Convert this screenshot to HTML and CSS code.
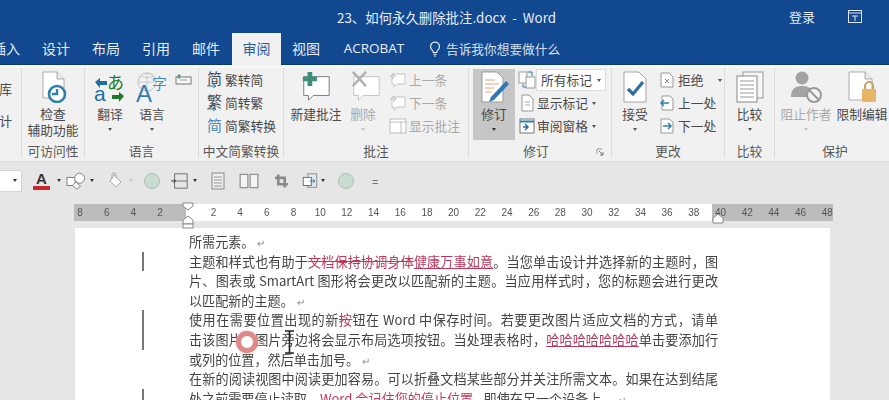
FILE: index.html
```html
<!DOCTYPE html>
<html lang="zh">
<head>
<meta charset="utf-8">
<title>23、如何永久删除批注.docx - Word</title>
<link rel="stylesheet" href="styles.css">
</head>
<body>
<div class="app">
  <header class="titlebar">
    <div class="doc-title">23、如何永久删除批注.docx&nbsp; -&nbsp; Word</div>
    <div class="login">登录</div>
    <svg class="win-icon" viewBox="0 0 14 13"><rect x=".5" y=".5" width="13" height="12" fill="none" stroke="#dfe8f4"/><path d="M.5 3h13M4 6h6M7 6v5" stroke="#dfe8f4" fill="none"/></svg>
  </header>

  <nav class="tabs">
    <div class="tab tab-clip">插入</div>
    <div class="tab">设计</div>
    <div class="tab">布局</div>
    <div class="tab">引用</div>
    <div class="tab">邮件</div>
    <div class="tab active">审阅</div>
    <div class="tab">视图</div>
    <div class="tab tab-wide">ACROBAT</div>
    <svg class="bulb" viewBox="0 0 12 16"><path d="M6 1a4.600 4.600 0 0 0-2.600 8.300c.6.500.8 1.200.8 2.200h3.600c0-1 .2-1.700.8-2.200A4.600 4.600 0 0 0 6 1zM4.400 13.200h3.200M5 15h2" fill="none" stroke="#e6eef8" stroke-width="1.100"/></svg>
    <div class="tell">告诉我你想要做什么</div>
  </nav>

  <section class="ribbon">
    <div class="group">
      <div class="body clip-col"><span>库</span><span>计</span></div>
      <div class="label"></div>
    </div>

    <div class="group">
      <div class="body">
        <div class="big full">
          <svg class="ico" viewBox="0 0 32 32"><path d="M6 1h14l7 7v19H6z" fill="#fff" stroke="#a9a9a9"/><path d="M20 1v7h7" fill="#eee" stroke="#a9a9a9"/><circle cx="20" cy="23" r="8" fill="#fff" stroke="#2f7fa8" stroke-width="2.600"/><path d="M20 18v5h-5" stroke="#2f7fa8" stroke-width="2.400" fill="none"/></svg>
          <span>检查</span><span>辅助功能</span>
        </div>
      </div>
      <div class="label">可访问性</div>
    </div>

    <div class="group">
      <div class="body pad4">
        <div class="big w42">
          <svg class="ico" viewBox="0 0 32 32"><text x="13" y="18" class="g-green">あ</text><text x="0" y="30" class="g-blue">a</text><path d="M1 11l5-4v3h7v4H6v3z" fill="#1f6f9c"/><path d="M30 25l-5-4v3h-7v4h7v3z" fill="#1d7a2c"/></svg>
          <span>翻译</span><i class="caret"></i>
        </div>
        <div class="big w42">
          <svg class="ico" viewBox="0 0 32 32"><circle cx="11" cy="11" r="9" fill="none" stroke="#bbb"/><path d="M2 11h18M11 2v18M5 5c4 2 8 2 12 0" stroke="#ccc" fill="none"/><text x="0" y="31" class="g-a">A</text><text x="16" y="18" class="g-zi">字</text></svg>
          <span>语言</span><i class="caret"></i>
        </div>
        <svg class="tiny" viewBox="0 0 17 12"><rect x="1" y="4" width="15" height="7" fill="#f7f7f7" stroke="#777"/><path d="M4 1v5M2 3h4" stroke="#2f8f6a"/><path d="M5 7h7" stroke="#999"/></svg>
      </div>
      <div class="label">语言</div>
    </div>

    <div class="group">
      <div class="body">
        <div class="rows pad8">
          <div class="row"><svg class="ico-s" viewBox="0 0 15 18"><text x="0" y="13" class="g-han">简</text><path d="M0 15h9m-3-2 3 2-3 2" stroke="#2f7fa8" fill="none"/></svg><span>繁转简</span></div>
          <div class="row"><svg class="ico-s" viewBox="0 0 15 18"><text x="0" y="13" class="g-han">繁</text><path d="M0 15h9m-3-2 3 2-3 2" stroke="#2f7fa8" fill="none"/></svg><span>简转繁</span></div>
          <div class="row"><svg class="ico-s" viewBox="0 0 15 18"><text x="0" y="14" class="g-han blue">简</text></svg><span>简繁转换</span></div>
        </div>
      </div>
      <div class="label">中文简繁转换</div>
    </div>

    <div class="group">
      <div class="body">
        <div class="big w52 ml6">
          <svg class="ico" viewBox="0 0 34 32"><path d="M4 5h27v20H14l-5 5v-5H4z" fill="#fff" stroke="#777"/><path d="M8 0h5v5h5v5h-5v5H8v-5H3V5h5z" fill="#3f8f78"/></svg>
          <span>新建批注</span>
        </div>
        <div class="big w42 off">
          <svg class="ico ico-del" viewBox="0 0 34 32"><path d="M4 5h27v20H14l-5 5v-5H4z" fill="#fff" stroke="#c2c2c2"/><path d="M3 0l14 15M17 0 3 15" stroke="#b0b0b0" stroke-width="2.600"/></svg>
          <span>删除</span><i class="caret pale"></i>
        </div>
        <div class="rows ml5 off">
          <div class="row"><svg class="ico-m" viewBox="0 0 18 16"><path d="M3 2h13v10H8l-3 3v-3H3z" fill="#fff" stroke="#c4c4c4"/><path d="M1 5l3-3 3 3M4 2v5" stroke="#bbb" fill="none"/></svg><span>上一条</span></div>
          <div class="row"><svg class="ico-m" viewBox="0 0 18 16"><path d="M3 2h13v10H8l-3 3v-3H3z" fill="#fff" stroke="#c4c4c4"/><path d="M1 4h6m-3-3 3 3-3 3" stroke="#bbb" fill="none"/></svg><span>下一条</span></div>
          <div class="row"><svg class="ico-m" viewBox="0 0 18 16"><rect x="1" y="1" width="16" height="14" fill="#fff" stroke="#bdbdbd"/><path d="M1 4h16M12 4v11" stroke="#bdbdbd"/></svg><span>显示批注</span></div>
        </div>
      </div>
      <div class="label">批注</div>
    </div>

    <div class="group">
      <div class="body">
        <div class="big track">
          <svg class="ico" viewBox="0 0 32 32"><path d="M4 1h15l6 6v24H4z" fill="#fff" stroke="#999"/><path d="M7 9h10M7 13h14M7 17h9M7 21h6" stroke="#d8a878"/><path d="M28 10l3 3-15 16-5 2 2-5z" fill="#2f77b5"/></svg>
          <span>修订</span><i class="caret dark"></i>
        </div>
        <div class="rows tight">
          <div class="row first"><svg class="ico-m" viewBox="0 0 18 18"><rect x="1" y="1" width="8" height="11" fill="#fff" stroke="#999"/><rect x="8" y="6" width="9" height="11" fill="#fff" stroke="#999"/><path d="M5 13v3h3M10 1h4v4" stroke="#2f7fa8" fill="none"/></svg><div class="select"><span>所有标记</span><i class="caret"></i></div></div>
          <div class="row"><svg class="ico-m" viewBox="0 0 18 18"><path d="M4 1h7l4 4v12H4z" fill="#fff" stroke="#999"/><path d="M7 8h5M7 11h5" stroke="#aaa"/></svg><span>显示标记</span><i class="caret"></i></div>
          <div class="row"><svg class="ico-m" viewBox="0 0 18 18"><rect x="2" y="2" width="14" height="14" fill="#fff" stroke="#777"/><path d="M2 4.500h14" stroke="#2f7fa8" stroke-width="2"/><path d="M5 10h5m-3-3 3 3-3 3" stroke="#2f6fa0" stroke-width="1.500" fill="none"/></svg><span>审阅窗格</span><i class="caret"></i></div>
        </div>
      </div>
      <div class="label label-shift">修订</div>
      <svg class="launcher" viewBox="0 0 8 8"><path d="M1 1h5M1 1v5" stroke="#999" fill="none"/><path d="M3 3l4 4M7 4v3H4" stroke="#777" fill="none"/></svg>
    </div>

    <div class="group">
      <div class="body">
        <div class="big w46">
          <svg class="ico" viewBox="0 0 32 32"><path d="M5 1h15l7 7v23H5z" fill="#fff" stroke="#a5a5a5"/><path d="M9 18l5 5 10-12" fill="none" stroke="#2b6f9f" stroke-width="3.200"/></svg>
          <span>接受</span><i class="caret"></i>
        </div>
        <div class="rows ml2">
          <div class="row"><svg class="ico-n" viewBox="0 0 14 18"><path d="M1 2h8l4 4v10H1z" fill="#fff" stroke="#999"/><path d="M5 8l4 4M9 8l-4 4" stroke="#888"/></svg><span>拒绝</span><i class="caret wide"></i></div>
          <div class="row"><svg class="ico-n" viewBox="0 0 14 18"><path d="M2 2h8l3 3v11H2z" fill="#fff" stroke="#999"/><path d="M9 9H1m3-3-3 3 3 3" stroke="#2f7fa8" stroke-width="1.500" fill="none"/></svg><span>上一处</span></div>
          <div class="row"><svg class="ico-n" viewBox="0 0 14 18"><path d="M1 2h8l4 3v11H1z" fill="#fff" stroke="#999"/><path d="M3 9h8m-3-3 3 3-3 3" stroke="#2f7fa8" stroke-width="1.500" fill="none"/></svg><span>下一处</span></div>
        </div>
      </div>
      <div class="label">更改</div>
    </div>

    <div class="group">
      <div class="body">
        <div class="big full">
          <svg class="ico" viewBox="0 0 32 32"><rect x="9" y="1" width="20" height="26" fill="#f6f6f6" stroke="#999"/><rect x="3" y="5" width="20" height="26" fill="#fff" stroke="#888"/><path d="M6 10h14M6 14h14M6 18h14M6 22h14M6 26h14" stroke="#999"/></svg>
          <span>比较</span><i class="caret"></i>
        </div>
      </div>
      <div class="label">比较</div>
    </div>

    <div class="group">
      <div class="body">
        <div class="big w62 off">
          <svg class="ico wide-ico" viewBox="0 0 36 32"><circle cx="14" cy="7" r="6.500" fill="#a3a3a3"/><path d="M3 26c0-8 4-11 11-11s11 3 11 11z" fill="#a3a3a3"/><circle cx="26" cy="24" r="7" fill="#f1f1f1" stroke="#9a9a9a" stroke-width="2"/><path d="M21 19l10 10" stroke="#9a9a9a" stroke-width="2"/></svg>
          <span>阻止作者</span><i class="caret pale"></i>
        </div>
        <div class="big w50">
          <svg class="ico" viewBox="0 0 32 32"><path d="M3 1h16l7 7v21H3z" fill="#fff" stroke="#aaa"/><path d="M19 1v7h7" fill="#eee" stroke="#aaa"/><path d="M19 18v-3a4 4 0 0 1 8 0v3" fill="none" stroke="#c9a45c" stroke-width="2"/><rect x="16" y="18" width="14" height="13" rx="1" fill="#e6b566"/></svg>
          <span class="nowrap">限制编辑</span>
        </div>
      </div>
      <div class="label label-right">保护</div>
    </div>
  </section>

  <section class="qat">
    <div class="q-box"><i class="caret dark"></i></div>
    <div class="q-color"><span class="q-a">A</span><i class="q-red"></i></div>
    <i class="caret dark"></i>
    <svg class="q-i" viewBox="0 0 22 20"><rect x="1" y="6" width="9" height="9" fill="#fff" stroke="#777"/><circle cx="15" cy="7" r="5.500" fill="#fff" stroke="#777"/><path d="M11 11l5 5-4 3-5-4z" fill="#fff" stroke="#777"/></svg>
    <i class="caret dark"></i>
    <svg class="q-i q-bucket" viewBox="0 0 18 18"><path d="M8 3l7 7-5 5-6-6z" fill="#fff" stroke="#aaa"/><path d="M6 7V3a2 2 0 0 1 4 0v3" fill="none" stroke="#aaa"/></svg>
    <i class="caret pale"></i>
    <i class="q-dot"></i>
    <svg class="q-i" viewBox="0 0 22 20"><path d="M5 2h14M5 18h14M5 10h14M5 2v16M19 2v16" stroke="#666" fill="none"/><path d="M1 10h5m-2-2 2 2-2 2" stroke="#333" fill="none"/></svg>
    <i class="caret dark"></i>
    <svg class="q-i" viewBox="0 0 14 18"><rect x="1" y="1" width="12" height="16" fill="#eee" stroke="#888"/><path d="M3 5h8M3 8h8M3 11h8M3 14h8" stroke="#999"/></svg>
    <svg class="q-i" viewBox="0 0 18 14"><rect x="1" y="1" width="7" height="12" fill="#f4f4f4" stroke="#888"/><rect x="10" y="1" width="7" height="12" fill="#f4f4f4" stroke="#888"/></svg>
    <svg class="q-i q-crop" viewBox="0 0 14 14"><path d="M4 1v9h9M1 4h9v9" fill="none" stroke="#8a8a8a" stroke-width="2.500"/></svg>
    <svg class="q-i" viewBox="0 0 19 20"><rect x="7" y="2" width="10" height="15" fill="#dfe8f2" stroke="#888"/><rect x="2" y="6" width="9" height="9" fill="#fff" stroke="#666"/><path d="M9 10h6m-2-2 2 2-2 2" stroke="#2f6fa0" fill="none"/></svg>
    <i class="caret dark"></i>
    <i class="q-dot"></i>
    <span class="q-eq">=</span>
  </section>

  <div class="ruler-wrap">
    <div class="ruler">
      <span>8</span><span>6</span><span>4</span><span>2</span><span></span><span>2</span><span>4</span><span>6</span><span>8</span><span>10</span><span>12</span><span>14</span><span>16</span><span>18</span><span>20</span><span>22</span><span>24</span><span>26</span><span>28</span><span>30</span><span>32</span><span>34</span><span>36</span><span>38</span><span>40</span><span>42</span><span>44</span><span>46</span><span>48</span>
    </div>
    <svg class="marker marker-l" viewBox="0 0 12 27"><path d="M1 1h10v3l-5 4-5-4z" fill="#fff" stroke="#888"/><path d="M6 14l5 4v4H1v-4z" fill="#fff" stroke="#888"/><rect x="1" y="22" width="10" height="4" fill="#fff" stroke="#888"/></svg>
    <svg class="marker marker-r" viewBox="0 0 12 12"><path d="M6 1l5 4v5H1V5z" fill="#fff" stroke="#888"/></svg>
  </div>

  <main class="page">
    <div class="line short">所需元素。<b class="ret">↵</b></div>
    <div class="line changed">主题和样式也有助于<del>文档保持协调身体</del><ins>健康万事如意</ins>。当您单击设计并选择新的主题时，图</div>
    <div class="line">片、图表或 SmartArt 图形将会更改以匹配新的主题。当应用样式时，您的标题会进行更改</div>
    <div class="line short">以匹配新的主题。<b class="ret">↵</b></div>
    <div class="line changed">使用在需要位置出现的新<del>按</del>钮在 Word 中保存时间。若要更改图片适应文档的方式，请单</div>
    <div class="line changed">击该图片，图片旁边将会显示布局选项按钮。当处理表格时，<ins>哈哈哈哈哈哈哈</ins>单击要添加行
      <i class="ring"></i>
      <svg class="ibeam" viewBox="0 0 11 24"><path d="M1 1h9M5.500 1v22M1 23h9" stroke="#222" stroke-width="1.600" fill="none"/></svg>
    </div>
    <div class="line short">或列的位置，然后单击加号。<b class="ret">↵</b></div>
    <div class="line">在新的阅读视图中阅读更加容易。可以折叠文档某些部分并关注所需文本。如果在达到结尾</div>
    <div class="line short changed">处之前需要停止读取，<em>Word 会记住您的停止位置</em> - 即使在另一个设备上。<b class="ret">↵</b></div>
  </main>
</div>
</body>
</html>
```
FILE: styles.css
```css
* { box-sizing: border-box; }
html, body { margin: 0; height: 100%; overflow: hidden; background: #e6e6e6; }
body { font-family: "Noto Sans CJK SC", "Noto Sans", sans-serif; }
.app { width: 889px; height: 400px; overflow: hidden; filter: blur(.45px); }

.titlebar { height: 33px; background: #12488f; color: #e4ecf6; display: flex; align-items: center; font-size: 13.4px; padding-left: 337px; }
.doc-title { width: 452px; white-space: nowrap; }
.login { width: 59px; font-size: 13px; }
.win-icon { width: 14px; height: 13px; }

.tabs { height: 32px; background: #12488f; border-bottom: 1px solid #0c3a70; color: #e6eef8; display: flex; align-items: center; font-size: 14px; white-space: nowrap; }
.tab { width: 50px; text-align: center; flex: none; height: 100%; line-height: 30px; }
.tab-clip { margin-left: -19px; }
.tab.active { background: #f1f1f1; color: #2a5f9c; height: 33px; width: 49px; margin-left: 1px; align-self: flex-start; }
.tab-wide { width: 86px; font-size: 13.5px; font-family: "Open Sans", sans-serif; }
.bulb { width: 12px; height: 16px; margin-left: 12px; }
.tell { margin-left: 5px; font-size: 12.7px; opacity: .9; }

.ribbon { height: 96px; background: #f1f1f1; border-top: 3px solid #f5f8f8; display: grid; grid-template-columns: 22px 63px 114px 85px 185px 143px 113px 50px 114px; color: #4a4a4a; font-size: 12.75px; }
.group { display: flex; flex-direction: column; border-right: 1px solid #dcdcdc; position: relative; margin-bottom: 3px; min-width: 0; }
.group:last-child { border-right: 0; }
.body { height: 75px; display: flex; padding-top: 3px; }
.label { text-align: center; line-height: 15px; color: #585858; white-space: nowrap; }
.label-shift { padding-right: 8px; }
.label-right { padding-left: 6px; }
.launcher { position: absolute; width: 8px; height: 8px; right: 7px; bottom: 2px; }

.clip-col { flex-direction: column; align-items: flex-end; padding: 13px 9px 0 0; gap: 16px; line-height: 16px; }
.pad4 { padding-left: 4px; }

.big { display: flex; flex-direction: column; align-items: center; line-height: 16px; flex: none; white-space: nowrap; }
.big span { display: block; }
.ico { width: 32px; height: 32px; margin-bottom: 3px; flex: none; }
.ico-del { margin-left: 6px; }
.wide-ico { width: 36px; }
.full { width: 100%; }
.ml6 { margin-left: 6px; }
.w42 { width: 42px; } .w46 { width: 46px; } .w50 { width: 50px; } .w52 { width: 52px; } .w62 { width: 62px; }
.track { width: 42px; margin: -2px 0 0 4px; padding-top: 2px; height: 71px; background: #c6c6c6; }
.off { color: #a8a8a8; }
.nowrap { white-space: nowrap; }
.tiny { width: 17px; height: 12px; margin: 2px 0 0 2px; }

.caret { display: block; width: 0; height: 0; border: 2.5px solid transparent; border-top: 3px solid #555; border-bottom: 0; margin-top: 6px; }
.caret.dark { border-top-color: #333; }
.caret.pale { border-top-color: #c4c4c4; }

.rows { display: flex; flex-direction: column; white-space: nowrap; margin-top: -3px; }
.pad8 { padding-left: 8px; }
.ml5 { margin-left: 5px; }
.ml2 { margin-left: 2px; }
.tight { margin-left: 3px; }
.row { height: 23px; display: flex; align-items: center; gap: 3px; flex: none; }
.row .caret { margin: 1px 0 0 4px; }
.row .caret.wide { margin-left: 11px; }
.ico-s { width: 15px; height: 18px; flex: none; }
.ico-m { width: 18px; height: 18px; flex: none; }
.ico-n { width: 14px; height: 18px; flex: none; margin-right: 1px; }
.ml5 .row { gap: 2px; }
.tight .row { gap: 0; }
.tight .row span { margin-left: 1px; }
.select { width: 70px; height: 22px; background: #fff; border: 1px solid #dcdcdc; display: flex; align-items: center; padding-left: 3px; }
.select .caret { margin-left: 5px; }

.g-green { font-size: 17px; fill: #1d7a2c; font-family: "Noto Sans CJK JP", sans-serif; }
.g-blue { font-size: 21px; fill: #1f6f9c; font-family: "Liberation Sans", sans-serif; }
.g-a { font-size: 24px; fill: #2f7fb0; font-family: "Liberation Sans", sans-serif; }
.g-zi { font-size: 15px; fill: #3c92c4; }
.g-han { font-size: 15px; fill: #3f4f5a; }
.g-han.blue { fill: #4f87b5; }

.qat { height: 43px; padding-bottom: 5px; background: #e6e6e6; border-top: 1px solid #dadada; display: grid; align-items: center; justify-items: center; grid-template-columns: 22px 33px 8px 25px 8px 31px 8px 33px 23px 8px 37px 26px 38px 19px 8px 37px 22px; }
.q-box { width: 100%; height: 22px; background: #fff; border: 1px solid #d4d4d4; border-left: 0; display: flex; align-items: center; justify-content: flex-end; padding-right: 4px; }
.q-box .caret { margin: 0; }
.qat > .caret { margin: 0; }
.q-color { display: flex; flex-direction: column; align-items: center; width: 17px; justify-self: end; margin-right: 5px; }
.q-a { font: 700 15px/15px "Liberation Sans", sans-serif; color: #333; }
.q-red { display: block; width: 17px; height: 4px; background: #c8262c; }
.q-i { width: 20px; height: 18px; }
.q-bucket { margin-left: 7px; }
.q-crop { width: 15px; }
.q-dot { display: block; width: 16px; height: 16px; border-radius: 50%; background: #c8dcd2; border: 1px solid #b2bcb6; }
.q-eq { font-size: 11px; color: #555; }

.ruler-wrap { height: 24px; position: relative; padding-left: 74px; }
.ruler { width: 759px; height: 17px; background: linear-gradient(to right, #bcbcbc 112px, #fff 112px, #fff 638px, #bcbcbc 638px); display: flex; overflow: hidden; font: 10px/17px "Liberation Sans", sans-serif; color: #555; }
.ruler span { width: 26.7px; flex: none; text-align: center; }
.ruler span:first-child { margin-left: -7.35px; }
.marker { position: absolute; }
.marker-l { left: 182px; top: -2px; width: 12px; height: 27px; }
.marker-r { left: 712px; top: 9px; width: 12px; height: 12px; }

.page { margin-left: 75px; width: 755px; height: 172px; background: #fff; padding: 4px 0 0 114px; font-size: 13.1px; color: #444; }
.line { width: 529px; height: 19.6px; line-height: 19.6px; text-align: justify; text-align-last: justify; position: relative; }
.line.short { text-align-last: left; }
.line.changed::before { content: ""; position: absolute; left: -47px; top: 0; width: 1.5px; height: 100%; background: #777; }
del { color: #c0385a; text-decoration: line-through; }
ins { color: #b8385a; text-decoration: underline; }
em { font-style: normal; color: #c0385a; }
.ret { font-weight: 400; font-size: 10px; color: #888; margin-left: 3px; }
.ring { position: absolute; left: 47px; top: 1px; width: 22px; height: 22px; border-radius: 50%; background: #fff; border: 5px solid #df8a8a; box-shadow: 0 0 2px #e8a0a0; }
.ibeam { position: absolute; left: 95px; top: 0; width: 11px; height: 24px; }
```
